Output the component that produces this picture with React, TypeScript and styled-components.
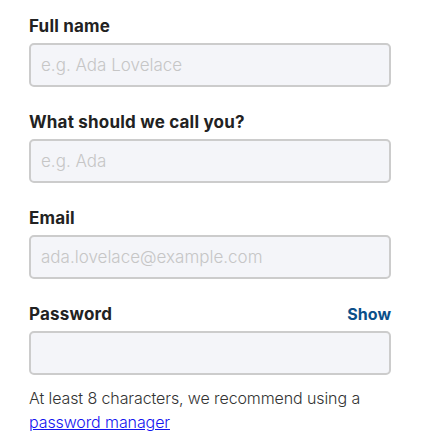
import React from "react";
import styled, { createGlobalStyle } from "styled-components";

const Global = createGlobalStyle`
  html, body { margin: 0; padding: 0; background: #ffffff; }
  body { font-family: Inter, "Noto Sans", sans-serif; }
`;

const Form = styled.form`
  display: flex;
  flex-direction: column;
  width: 362px;
  padding: 14px 0 0 29px;
`;

const Field = styled.div`
  display: flex;
  flex-direction: column;
  gap: 5px;
  margin-bottom: 23px;
`;

const LabelRow = styled.div`
  display: flex;
  justify-content: space-between;
  align-items: center;
  height: 24px;
`;

const Label = styled.label`
  font-size: 17px;
  font-weight: 700;
  letter-spacing: 0.2px;
  color: #222222;
  line-height: 24px;
`;

const ShowButton = styled.button`
  border: 0;
  background: none;
  padding: 0;
  font-family: Inter, "Noto Sans", sans-serif;
  font-size: 16px;
  font-weight: 700;
  color: #0b4f8a;
  cursor: pointer;
`;

const Input = styled.input`
  box-sizing: border-box;
  height: 44px;
  width: 100%;
  border: 2px solid #cccccc;
  border-radius: 5px;
  background: #f4f5f9;
  padding: 0 10px;
  font-family: Inter, "Noto Sans", sans-serif;
  font-size: 17px;
  font-weight: 300;
  color: #222;
  &::placeholder { color: #c6c6c6; }
`;

const Hint = styled.p`
  margin: -12px 0 0 0;
  font-size: 16px;
  line-height: 24px;
  letter-spacing: -0.1px;
  color: #333333;
  font-weight: 300;
`;

const HintLink = styled.a`
  color: #1414f0;
  text-decoration: underline;
`;

export default function App() {
  return (
    <>
      <Global />
      <Form onSubmit={(e) => e.preventDefault()}>
        <Field>
          <LabelRow><Label htmlFor="fn">Full name</Label></LabelRow>
          <Input id="fn" placeholder="e.g. Ada Lovelace" />
        </Field>
        <Field>
          <LabelRow><Label htmlFor="nick">What should we call you?</Label></LabelRow>
          <Input id="nick" placeholder="e.g. Ada" />
        </Field>
        <Field>
          <LabelRow><Label htmlFor="em">Email</Label></LabelRow>
          <Input id="em" placeholder="ada.lovelace@example.com" />
        </Field>
        <Field>
          <LabelRow>
            <Label htmlFor="pw">Password</Label>
            <ShowButton type="button">Show</ShowButton>
          </LabelRow>
          <Input id="pw" type="password" />
        </Field>
        <Hint>
          At least 8 characters, we recommend using a{" "}
          <HintLink href="#">password manager</HintLink>
        </Hint>
      </Form>
    </>
  );
}
